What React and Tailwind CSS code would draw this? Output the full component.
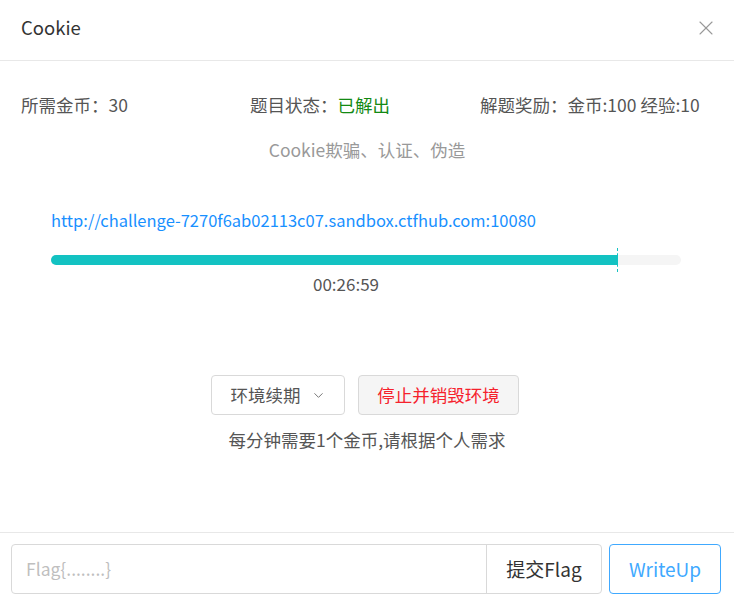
import React from "react";
import { X, ChevronDown } from "lucide-react";

const font = { fontFamily: '"Noto Sans CJK SC", "Noto Sans", sans-serif' };

export default function App() {
  const url = "http://challenge-7270f6ab02113c07.sandbox.ctfhub.com:10080";

  return (
    <div className="w-[734px] h-[602px] bg-white flex flex-col text-[#555]" style={font}>
      {/* Header */}
      <div className="h-[61px] flex items-center justify-between pl-[21px] pr-[16px] pb-[5px] border-b border-[#e8e8e8] shrink-0">
        <span className="text-[18.5px] text-[#333]">Cookie</span>
        <X size={24} strokeWidth={1.1} className="text-[#999]" />
      </div>

      {/* Body */}
      <div className="flex-1 flex flex-col">
        <div className="flex pl-[21px] pt-[32px] text-[17.5px] leading-[24px]">
          <div className="w-[229px]">所需金币：30</div>
          <div className="w-[230px]">
            题目状态：<span className="text-[#138a13]">已解出</span>
          </div>
          <div>解题奖励：金币:100 经验:10</div>
        </div>
        <div className="text-center text-[17.5px] leading-[24px] text-[#999] mt-[21px]">
          Cookie欺骗、认证、伪造
        </div>

        <div className="px-[51px] mt-[46px]">
          <a className="text-[16.5px] leading-[24px] text-[#1890ff]">{url}</a>
          <div className="relative mt-[23px] h-[10px] rounded-full bg-[#f5f5f5] w-[630px]">
            <div className="h-full w-[567px] rounded-l-full bg-[#13c2c2]" />
            <div className="absolute left-[566px] top-[-7px] h-[24px] border-l border-dashed border-[#13c2c2]" />
          </div>
          <div className="w-[590px] text-center text-[17px] leading-[24px] mt-[7px]">00:26:59</div>
        </div>

        <div className="flex justify-center gap-[13px] mt-[79px] pr-[4px]">
          <button className="h-[40px] w-[134px] border border-[#d9d9d9] rounded-[4px] bg-white text-[17.5px] flex items-center justify-center gap-[10px]">
            环境续期
            <ChevronDown size={15} strokeWidth={1.6} className="text-[#777]" />
          </button>
          <button className="h-[40px] w-[161px] border border-[#d9d9d9] rounded-[4px] bg-[#f5f5f5] text-[17.5px] text-[#f5222d]">
            停止并销毁环境
          </button>
        </div>
        <div className="text-center text-[17.5px] leading-[24px] mt-[13px]">
          每分钟需要1个金币,请根据个人需求
        </div>
      </div>

      {/* Footer */}
      <div className="h-[70px] border-t border-[#e8e8e8] flex items-center pl-[11px] pr-[13px] pt-[3px] gap-[7px] shrink-0">
        <div className="flex h-[50px] w-[591px] border border-[#d9d9d9] rounded-[4px]">
          <input
            placeholder="Flag{........}"
            className="flex-1 min-w-0 px-[14px] text-[17.5px] outline-none placeholder:text-[#bfbfbf] bg-transparent"
            style={font}
          />
          <button className="w-[115px] border-l border-[#d9d9d9] text-[19px] text-[#333]">提交Flag</button>
        </div>
        <button className="h-[50px] flex-1 border border-[#40a9ff] rounded-[4px] text-[19px] text-[#40a9ff]">
          WriteUp
        </button>
      </div>
    </div>
  );
}
